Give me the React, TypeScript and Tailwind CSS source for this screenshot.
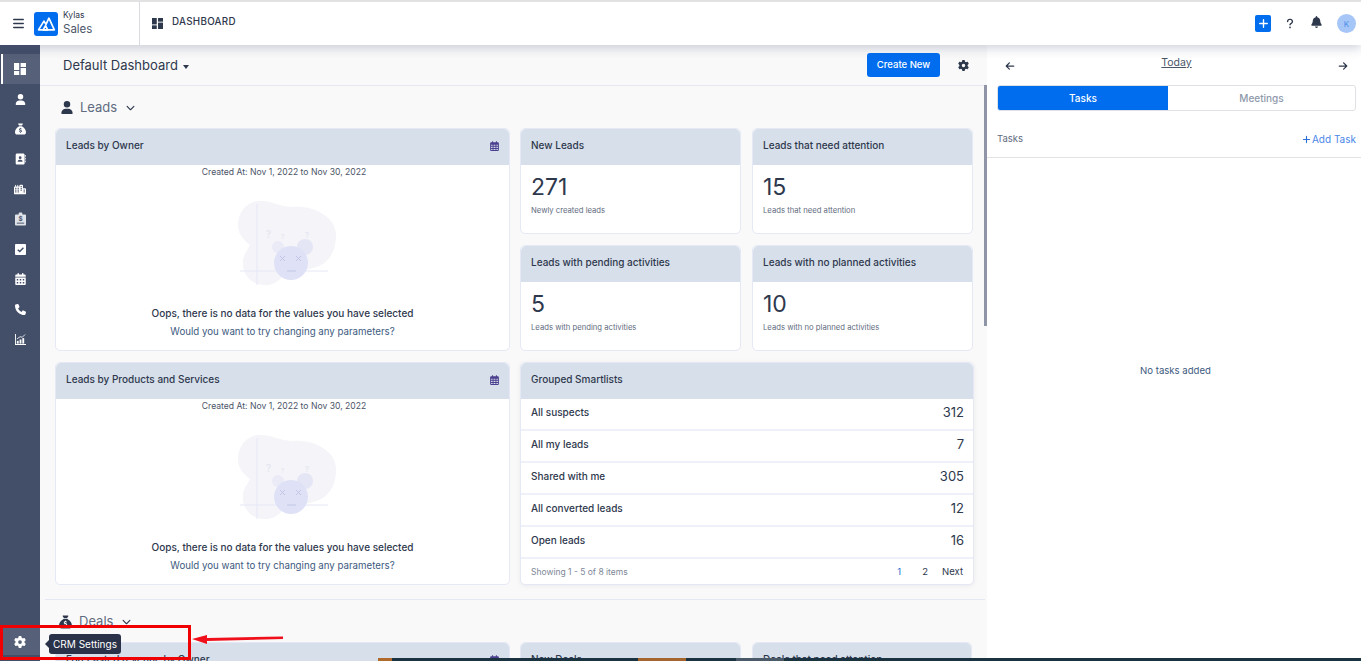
import React from 'react';
import { FaUser, FaSackDollar, FaAddressBook, FaCity, FaCalendarDays, FaPhone, FaGear, FaBell, FaQuestion, FaBars, FaArrowLeft, FaArrowRight, FaPlus, FaRegCalendarDays, FaChevronDown } from 'react-icons/fa6';

type IconProps = { className?: string };

const DashIcon = ({ className }: IconProps) => (
  <svg viewBox="0 0 12 12" className={className} fill="currentColor">
    <rect x="0" y="0" width="5.2" height="7" />
    <rect x="0" y="8" width="5.2" height="4" />
    <rect x="6.6" y="0" width="5.4" height="4" />
    <rect x="6.6" y="5" width="5.4" height="7" />
  </svg>
);

const ClipboardDollar = ({ className }: IconProps) => (
  <svg viewBox="0 0 12 14" className={className}>
    <path d="M1 2 H4 V1 Q4 0 5 0 H7 Q8 0 8 1 V2 H11 Q12 2 12 3 V13 Q12 14 11 14 H1 Q0 14 0 13 V3 Q0 2 1 2 Z" fill="#dfe2e8" />
    <text x="6" y="9.5" textAnchor="middle" fontSize="7" fontWeight="700" fill="#434e68" fontFamily="Inter, sans-serif">$</text>
    <rect x="2" y="11" width="8" height="1" fill="#434e68" />
  </svg>
);

const CheckBox = ({ className }: IconProps) => (
  <svg viewBox="0 0 12 12" className={className}>
    <rect width="12" height="12" rx="1" fill="#fff" />
    <path d="M3 6.2 L5.2 8.2 L9.2 4.2" fill="none" stroke="#434e68" strokeWidth="1.6" />
  </svg>
);

const ChartBars = ({ className }: IconProps) => (
  <svg viewBox="0 0 12 12" className={className} fill="currentColor">
    <path d="M0 0 H1 V11 H12 V12 H0 Z" />
    <rect x="2" y="7.5" width="2" height="3" />
    <rect x="5" y="6" width="2" height="4.5" />
    <rect x="8" y="4.5" width="2" height="6" />
    <path d="M2 5.5 L5.5 3 L8 3.5 L11 0.5" fill="none" stroke="currentColor" strokeWidth="0.9" />
  </svg>
);

const navIcons = [
  { Icon: FaUser, size: 'w-[11px] h-[11px]' },
  { Icon: FaSackDollar, size: 'w-[11px] h-[12px]' },
  { Icon: FaAddressBook, size: 'w-[11px] h-[12px]' },
  { Icon: FaCity, size: 'w-[12px] h-[11px]' },
  { Icon: ClipboardDollar, size: 'w-[11px] h-[14px]' },
  { Icon: CheckBox, size: 'w-[11px] h-[11px]' },
  { Icon: FaCalendarDays, size: 'w-[11px] h-[12px]' },
  { Icon: FaPhone, size: 'w-[11px] h-[11px]' },
  { Icon: ChartBars, size: 'w-[11px] h-[11px]' },
];

const NoData = () => (
  <svg viewBox="0 0 100 85" className="w-[100px] h-[85px]">
    <path d="M20 0 C32 -1 42 6 55 6 C72 4 98 14 98 34 C98 54 88 64 75 67 C66 70 56 69 48 71 C42 80 34 85 26 84 C14 84 4 74 5 61 C5 54 9 50 12 44 C4 38 0 32 0 24 C0 12 8 1 20 0 Z" fill="#f4f4f9" />
    <path d="M19 3 V84 M2 70 H90" stroke="#e6e8f6" strokeWidth="1" fill="none" />
    <circle cx="40" cy="46" r="6" fill="#eaebf7" />
    <circle cx="67" cy="46" r="8" fill="#e4e6f6" />
    <circle cx="53" cy="62" r="17" fill="#dfe2f6" />
    <path d="M42 55 l5 5 m0 -5 l-5 5 M58 55 l5 5 m0 -5 l-5 5 M49 70 h9" stroke="#c2c6e4" strokeWidth="1" fill="none" />
    <text x="28" y="37" fontSize="10" fill="#e3e4ee" fontFamily="Inter, sans-serif">?</text>
    <text x="43" y="38" fontSize="6" fill="#e3e4ee" fontFamily="Inter, sans-serif">?</text>
    <text x="67" y="37" fontSize="8" fill="#e3e4ee" fontFamily="Inter, sans-serif">?</text>
  </svg>
);

const CardHead = ({ title, calendar }: { title: string; calendar?: boolean }) => (
  <div className="h-[36px] shrink-0 bg-[#d6dfea] flex items-center justify-between pl-[10px] pr-[10px] pb-[3px] rounded-t-[5px]">
    <span className="text-[10px] font-medium text-[#2e384d]">{title}</span>
    {calendar && <FaRegCalendarDays className="w-[9px] h-[10px] text-[#4b3f8f]" />}
  </div>
);

const ChartCard = ({ title }: { title: string }) => (
  <div className="h-[223px] bg-white rounded-[5px] border border-[#e5e9f5] flex flex-col overflow-hidden">
    <CardHead title={title} calendar />
    <p className="text-center text-[8.6px] text-[#4b5468] mt-[1px] pl-[3px] leading-[12px]">Created At: Nov 1, 2022 to Nov 30, 2022</p>
    <div className="flex justify-center mt-[23px] pl-[11px]">
      <NoData />
    </div>
    <p className="text-center text-[10px] font-medium text-[#2e384d] mt-[20px] leading-[14px]">Oops, there is no data for the values you have selected</p>
    <p className="text-center text-[9.7px] text-[#3d5a80] mt-[5px] leading-[14px]">Would you want to try changing any parameters?</p>
  </div>
);

const StatCard = ({ title, value, note }: { title: string; value: string; note: string }) => (
  <div className="h-[106px] bg-white rounded-[5px] border border-[#e5e9f5] flex flex-col overflow-hidden">
    <CardHead title={title} />
    <p className="text-[23px] leading-[28px] text-[#2e384d] pl-[10px] mt-[8px]">{value}</p>
    <p className="text-[7.7px] text-[#5f6b80] pl-[10px] mt-[5px] leading-[10px]">{note}</p>
  </div>
);

const smartlists: [string, string][] = [
  ['All suspects', '312'],
  ['All my leads', '7'],
  ['Shared with me', '305'],
  ['All converted leads', '12'],
  ['Open leads', '16'],
];

export default function App() {
  return (
    <div className="relative w-[1361px] h-[661px] overflow-hidden bg-white font-['Inter',sans-serif] text-[#2e384d]">
      {/* Top bar */}
      <header className="h-[45px] bg-white border-t-2 border-[#e2e2e2] flex items-center relative z-10 shadow-[0_3px_10px_rgba(60,70,110,0.25)]">
        <div className="w-[140px] h-full flex items-center border-r border-[#d9dbe0] pl-[13px]">
          <FaBars className="w-[11px] h-[13px] text-[#2e384d]" />
          <div className="ml-[10px] w-[24px] h-[24px] bg-[#006dee] rounded-[3px] flex items-center justify-center">
            <svg viewBox="0 0 24 24" className="w-[20px] h-[20px]" fill="none" stroke="#fff" strokeWidth="2" strokeLinejoin="round">
              <path d="M3 19 L9.5 8.5 L12 12.5 L15.5 5 L22 19 Z" />
              <path d="M8.5 19 L11.5 14 L14 19 Z" />
            </svg>
          </div>
          <div className="ml-[5px] flex flex-col">
            <span className="text-[8.5px] leading-[11px] text-[#2e384d]">Kylas</span>
            <span className="text-[11.5px] leading-[16px] text-[#4a5568]">Sales</span>
          </div>
        </div>
        <DashIcon className="ml-[12px] w-[11px] h-[11px] text-[#2e384d]" />
        <span className="ml-[9px] text-[9.8px] font-medium tracking-[0.3px] text-[#2e384d] -mt-[3px]">DASHBOARD</span>
        <div className="ml-auto flex items-center pr-[5px]">
          <div className="w-[16px] h-[17px] rounded-[2px] bg-[#006dee] flex items-center justify-center mr-[1px]">
            <FaPlus className="w-[11px] h-[11px] text-white" />
          </div>
          <FaQuestion className="ml-[14px] w-[8px] h-[11px] text-[#2e384d]" />
          <FaBell className="ml-[17px] w-[11px] h-[12px] text-[#2e384d] -mt-[3px]" />
          <div className="ml-[15px] w-[19px] h-[19px] rounded-full bg-[#a6c6f7] text-[#4d8ce8] text-[8px] flex items-center justify-center">K</div>
        </div>
      </header>

      <div className="flex h-[616px]">
        {/* Sidebar */}
        <aside className="w-[40px] shrink-0 bg-[#434e68] flex flex-col pt-[9px]">
          <div className="h-[30px] bg-[#566078] border-l-2 border-white ml-[1px] flex items-center justify-center">
            <DashIcon className="w-[12px] h-[12px] text-white -ml-[3px]" />
          </div>
          {navIcons.map(({ Icon, size }, i) => (
            <div key={i} className="h-[30px] flex items-center justify-center">
              <Icon className={`${size} text-white`} />
            </div>
          ))}
        </aside>

        {/* Dashboard */}
        <main className="w-[947px] shrink-0 bg-[#f9f9f9] relative overflow-hidden">
          <div className="h-[41px] border-b border-[#e5e7f3] flex items-center pl-[23px] pr-[18px]">
            <span className="text-[13px] text-[#2e384d] mt-[1px]">Default Dashboard</span>
            <span className="ml-[5px] mt-[3px] w-0 h-0 border-x-[3.5px] border-x-transparent border-t-[4px] border-t-[#2e384d]" />
            <button className="ml-auto w-[73px] h-[24px] bg-[#006dee] rounded-[3px] text-white text-[9.5px] font-medium">Create New</button>
            <FaGear className="ml-[18px] w-[11px] h-[11px] text-[#2e384d]" />
          </div>

          <div className="h-[42px] flex items-center pl-[21px] pt-[1px]">
            <FaUser className="w-[12px] h-[13px] text-[#2e384d]" />
            <span className="ml-[7px] text-[13px] text-[#5f6b80]">Leads</span>
            <FaChevronDown className="ml-[9px] w-[9px] h-[9px] text-[#2e384d]" />
          </div>

          <div className="ml-[15px] w-[919px] grid grid-cols-[455px_1fr] gap-x-[10px] gap-y-[11px]">
            <ChartCard title="Leads by Owner" />
            <div className="grid grid-cols-[221px_221px] gap-x-[11px] gap-y-[11px] content-start">
              <StatCard title="New Leads" value="271" note="Newly created leads" />
              <StatCard title="Leads that need attention" value="15" note="Leads that need attention" />
              <StatCard title="Leads with pending activities" value="5" note="Leads with pending activities" />
              <StatCard title="Leads with no planned activities" value="10" note="Leads with no planned activities" />
            </div>
            <ChartCard title="Leads by Products and Services" />
            <div className="h-[223px] bg-white rounded-[5px] border border-[#e5e9f5] shadow-[0_1px_4px_rgba(60,70,110,0.08)] flex flex-col overflow-hidden">
              <CardHead title="Grouped Smartlists" />
              {smartlists.map(([name, count]) => (
                <div key={name} className="h-[32px] shrink-0 border-b-2 border-[#eef0fa] flex items-center justify-between pl-[10px] pr-[9px] pb-[3px]">
                  <span className="text-[10px] font-medium text-[#2e384d]">{name}</span>
                  <span className="text-[13px] text-[#2e384d] mt-[1px]">{count}</span>
                </div>
              ))}
              <div className="flex-1 flex items-center justify-between pl-[10px] pr-[10px] pt-[2px]">
                <span className="text-[8.5px] text-[#7d8798]">Showing 1 - 5 of 8 items</span>
                <div className="flex items-center text-[9.5px] text-[#2e384d]">
                  <span className="text-[#2b6fd6]">1</span>
                  <span className="ml-[21px]">2</span>
                  <span className="ml-[14px]">Next</span>
                </div>
              </div>
            </div>
          </div>

          <div className="ml-[5px] w-[940px] mt-[14px] border-t border-[#e5e7f3]" />
          <div className="h-[42px] flex items-center pl-[19px] pt-[1px]">
            <FaSackDollar className="w-[13px] h-[14px] text-[#2e384d]" />
            <span className="ml-[7px] text-[13px] text-[#5f6b80]">Deals</span>
            <FaChevronDown className="ml-[9px] w-[9px] h-[9px] text-[#2e384d]" />
          </div>
          <div className="ml-[15px] w-[919px] grid grid-cols-[455px_221px_221px] gap-x-[10px]">
            <div className="border border-[#e5e9f5] rounded-t-[5px]"><CardHead title="Forecasted revenue by Owner" calendar /></div>
            <div className="border border-[#e5e9f5] rounded-t-[5px]"><CardHead title="New Deals" /></div>
            <div className="border border-[#e5e9f5] rounded-t-[5px] ml-[1px]"><CardHead title="Deals that need attention" /></div>
          </div>

          {/* Scrollbar thumb */}
          <div className="absolute top-[40px] right-0 w-[3px] h-[241px] bg-[#8f95a6]" />
        </main>

        {/* Right panel */}
        <section className="flex-1 bg-white">
          <div className="h-[41px] flex items-start justify-between pl-[18px] pr-[13px] pt-[10px]">
            <FaArrowLeft className="w-[10px] h-[10px] mt-[6px] text-[#2e384d]" />
            <span className="text-[10.5px] underline text-[#4a5568]">Today</span>
            <FaArrowRight className="w-[10px] h-[10px] mt-[6px] text-[#2e384d]" />
          </div>
          <div className="ml-[10px] w-[359px] h-[26px] flex rounded-[3px] border border-[#dfe1e6] overflow-hidden -mt-[1px]">
            <div className="w-[170px] bg-[#006dee] text-white text-[10px] font-medium flex items-center justify-center">Tasks</div>
            <div className="flex-1 text-[#8e99ab] text-[10px] font-medium flex items-center justify-center">Meetings</div>
          </div>
          <div className="h-[47px] border-b border-[#e2e2e2] flex items-center justify-between pl-[10px] pr-[5px] pt-[10px]">
            <span className="text-[9.5px] text-[#5f6b80]">Tasks</span>
            <span className="flex items-center text-[10px] text-[#4a86e8]"><FaPlus className="w-[9px] h-[9px] mr-[1px] text-[#2b6fd6]" />Add Task</span>
          </div>
          <p className="text-center text-[9.6px] text-[#3d5a80] mt-[206px] pl-[3px]">No tasks added</p>
        </section>
      </div>

      {/* Tooltip on the settings item */}
      <div className="absolute left-[3px] top-[628px] w-[37px] h-[27px] bg-[#566078] flex items-center justify-center">
        <FaGear className="w-[12px] h-[12px] text-white -ml-[3px]" />
      </div>
      <div className="absolute left-[49px] top-[634px] h-[20px] w-[72px] bg-[#2a3249] rounded-[3px] text-white text-[10px] flex items-center justify-center">
        CRM Settings
        <span className="absolute -left-[4px] top-[6px] w-0 h-0 border-y-[4px] border-y-transparent border-r-[4px] border-r-[#2a3249]" />
      </div>

      {/* Annotation */}
      <div className="absolute left-0 top-[625px] w-[191px] h-[35px] border-[3px] border-[#f00000]" />
      <svg viewBox="0 0 92 12" className="absolute left-[192px] top-[633px] w-[92px] h-[12px]">
        <path d="M0 6 L15 2 V5 L91 3.5 V6 L15 8 V11 Z" fill="#f0101c" />
      </svg>

      {/* Bottom strip */}
      <div className="absolute left-[378px] right-0 top-[658px] h-[3px] flex bg-[#1b3240]">
        <div className="w-[14px] bg-[#b06a2c]" />
        <div className="ml-[246px] w-[48px] bg-[#a5652f]" />
        <div className="ml-[50px] w-[48px] bg-[#4b5a68]" />
      </div>
    </div>
  );
}
